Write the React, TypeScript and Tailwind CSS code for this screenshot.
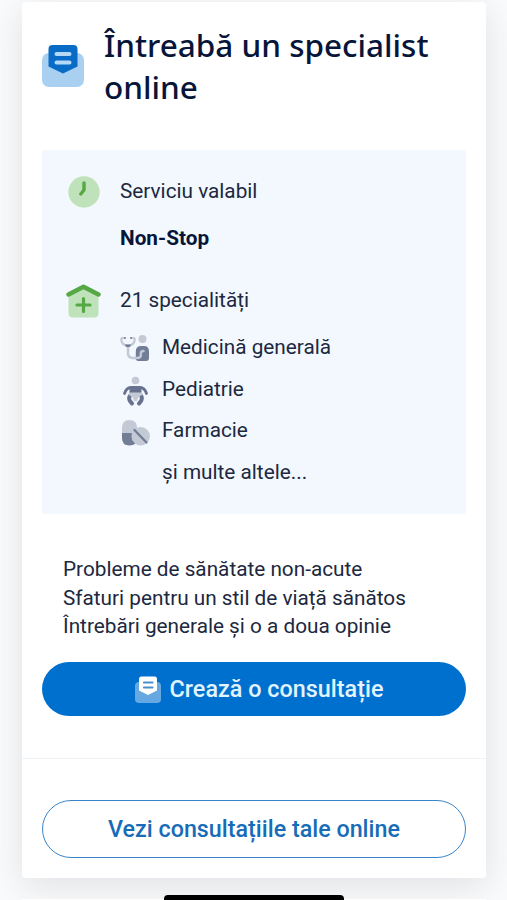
import type { ReactNode } from "react";

interface IconProps {
  className?: string;
}

function MessageIcon({ className }: IconProps) {
  return (
    <svg viewBox="0 0 42 43" fill="none" className={className}>
      <rect y="9" width="42" height="34" rx="7" fill="#a9cff1" />
      <path
        d="M6.500 5Q6.500 1 10.500 1H31.500Q35.500 1 35.500 5V22.500L21 29.500L6.500 22.500Z"
        fill="#086cc7"
      />
      <path
        d="M14.500 10H27.500M14.500 18.500H27.500"
        stroke="#b3d8f8"
        strokeWidth="4"
        strokeLinecap="round"
      />
    </svg>
  );
}

function MessageLightIcon({ className }: IconProps) {
  return (
    <svg viewBox="0 0 26 27" fill="none" className={className}>
      <rect y="6" width="26" height="21" rx="4" fill="#66a9e2" />
      <path
        d="M4 3Q4 .5 6.500 .5H19.500Q22 .5 22 3V14.500L13 19L4 14.500Z"
        fill="#fff"
      />
      <path
        d="M9 6.500H17.500M9 11.500H17.500"
        stroke="#4a8fcc"
        strokeWidth="2.200"
        strokeLinecap="round"
      />
    </svg>
  );
}

function ClockIcon({ className }: IconProps) {
  return (
    <svg viewBox="0 0 32 32" fill="none" className={className}>
      <circle cx="16" cy="16" r="15.700" fill="#bfe2bb" />
      <path
        d="M16 7V14L12.800 18"
        stroke="#56a845"
        strokeWidth="3.400"
        strokeLinecap="round"
        strokeLinejoin="round"
      />
    </svg>
  );
}

function ClinicIcon({ className }: IconProps) {
  return (
    <svg viewBox="0 0 35 34" fill="none" className={className}>
      <path
        d="M2.500 10L17.500 2L32.500 10V29Q32.500 33.500 28 33.500H7Q2.500 33.500 2.500 29Z"
        fill="#bfe2bb"
      />
      <path
        d="M2.500 10.500L17.500 2.800L32.500 10.500"
        stroke="#56a845"
        strokeWidth="4.400"
        strokeLinecap="round"
        strokeLinejoin="round"
      />
      <path
        d="M17.500 14.500V27.500M11 21H24"
        stroke="#56a845"
        strokeWidth="3.200"
        strokeLinecap="round"
      />
    </svg>
  );
}

function StethoscopeIcon({ className }: IconProps) {
  return (
    <svg viewBox="0 0 30 30" fill="none" className={className}>
      <circle cx="22.500" cy="5" r="4" fill="#c3cad6" />
      <path
        d="M15.800 26V17.500Q15.800 12 21 12H24Q29 12 29 17.500V24Q29 27 26 27H18Z"
        fill="#727d96"
      />
      <path
        d="M4 4H2.500Q1 4 1.300 6Q2 11.500 8 11.500Q14 11.500 14.700 6Q15 4 13.500 4H12"
        stroke="#c3cad6"
        strokeWidth="2.200"
        strokeLinecap="round"
      />
      <path
        d="M8 13V19Q8 24 13 24H17Q21.500 24 20.800 19.500Q20.800 17 23.500 17"
        stroke="#c3cad6"
        strokeWidth="2.500"
        strokeLinecap="round"
      />
      <circle cx="5" cy="4" r="1" fill="#727d96" />
      <circle cx="11" cy="4" r="1" fill="#727d96" />
      <path d="M5 10.500H11L10 13H6Z" fill="#727d96" />
    </svg>
  );
}

function BabyIcon({ className }: IconProps) {
  return (
    <svg viewBox="0 0 30 30" fill="none" className={className}>
      <circle cx="15.500" cy="4.500" r="3.800" fill="#c3cad6" />
      <path
        d="M4.500 17.500Q6.500 11.500 11 11.500H20Q24.500 11.500 26.500 17.500"
        stroke="#68728f"
        strokeWidth="2.800"
        strokeLinecap="round"
      />
      <path d="M9.500 10.500H21.500L21.500 17H9.500Z" fill="#68728f" />
      <path
        d="M9.700 20Q8.500 22.500 10 25L12 27.500M21.300 20Q22.500 22.500 21 25L19 27.500"
        stroke="#68728f"
        strokeWidth="4"
        strokeLinecap="round"
      />
      <path d="M9 16.500H22L22.500 19Q18 20 17 25H14Q13 20 8.500 19Z" fill="#c3cad6" />
    </svg>
  );
}

function PillsIcon({ className }: IconProps) {
  return (
    <svg viewBox="0 0 30 30" fill="none" className={className}>
      <path d="M2 16V10.500Q2 3 9.500 3Q17 3 17 10.500V16Z" fill="#c3cad6" />
      <path d="M2 16H17V21Q17 28.500 9.500 28.500Q2 28.500 2 21Z" fill="#727d96" />
      <circle cx="20.700" cy="19.300" r="9.200" fill="#c3cad6" />
      <path
        d="M14.500 13L26.500 25.500"
        stroke="#727d96"
        strokeWidth="2.300"
        strokeLinecap="round"
      />
    </svg>
  );
}

const specialities: { name: string; icon: ReactNode }[] = [
  {
    name: "Medicină generală",
    icon: <StethoscopeIcon className="w-[30px] h-[30px]" />,
  },
  { name: "Pediatrie", icon: <BabyIcon className="w-[30px] h-[30px]" /> },
  { name: "Farmacie", icon: <PillsIcon className="w-[30px] h-[30px]" /> },
  { name: "și multe altele...", icon: null },
];

export default function App() {
  return (
    <div className="relative h-[900px] overflow-hidden bg-[#fafbfc] pt-[2px] pl-[22px] pr-[21px] font-['Roboto',sans-serif] text-[20.750px] text-[#202840]">
      <main className="h-[876px] rounded-[4px] bg-white shadow-[0_8px_36px_rgba(35,45,60,0.13)]">
        <header className="flex h-[148px] items-start px-5 pt-[22px]">
          <MessageIcon className="mt-[20px] h-[43px] w-[42px] shrink-0" />
          <h1 className="ml-[20px] font-['Noto_Sans',sans-serif] text-[31.500px] font-medium leading-[42px] text-[#07153a]">
            Întreabă un specialist online
          </h1>
        </header>

        <section className="mx-5 h-[364px] rounded-[3px] bg-[#f2f8fd] pl-[24px] pt-[19px]">
          <div className="flex h-[46px] items-center">
            <div className="flex w-[54px] shrink-0 pl-[2px]">
              <ClockIcon className="h-8 w-8" />
            </div>
            <span>Serviciu valabil</span>
          </div>
          <div className="flex h-[47px] items-center pl-[54px] font-bold text-[#07153a]">
            Non-Stop
          </div>
          <div className="mt-[15px] flex h-[47px] items-center">
            <ClinicIcon className="mr-[19px] h-[34px] w-[35px] shrink-0" />
            <span>21 specialități</span>
          </div>
          <ul className="pl-[54px] pt-[3px]">
            {specialities.map(({ name, icon }) => (
              <li key={name} className="flex h-[41.500px] items-center">
                <div className="mr-3 w-[30px] shrink-0 pt-[3px]">{icon}</div>
                {name}
              </li>
            ))}
          </ul>
        </section>

        <p className="ml-[41px] mt-[41px] leading-[28.700px]">
          Probleme de sănătate non-acute
          <br />
          Sfaturi pentru un stil de viață sănătos
          <br />
          Întrebări generale și o a doua opinie
        </p>

        <div className="px-5 pt-[21px]">
          <button className="flex h-[54px] w-full items-center justify-center gap-[9px] rounded-full bg-[#0070ce] pl-[10px] text-[23.400px] font-medium text-[#e1f4ff]">
            <MessageLightIcon className="h-[27px] w-[26px]" />
            <span>Crează o consultație</span>
          </button>
        </div>

        <div className="mt-[42px] border-t border-[#f2f3f5] px-5 pt-[41px]">
          <button className="h-[58px] w-full rounded-full border-[1.500px] border-[#3984c8] text-[23.300px] font-medium text-[#176cb8]">
            Vezi consultațiile tale online
          </button>
        </div>
      </main>

      <div className="mt-[21px] h-[1px] bg-white" />
      <div className="absolute left-[164px] top-[895px] h-[10px] w-[180px] rounded-[4px] bg-black" />
    </div>
  );
}
